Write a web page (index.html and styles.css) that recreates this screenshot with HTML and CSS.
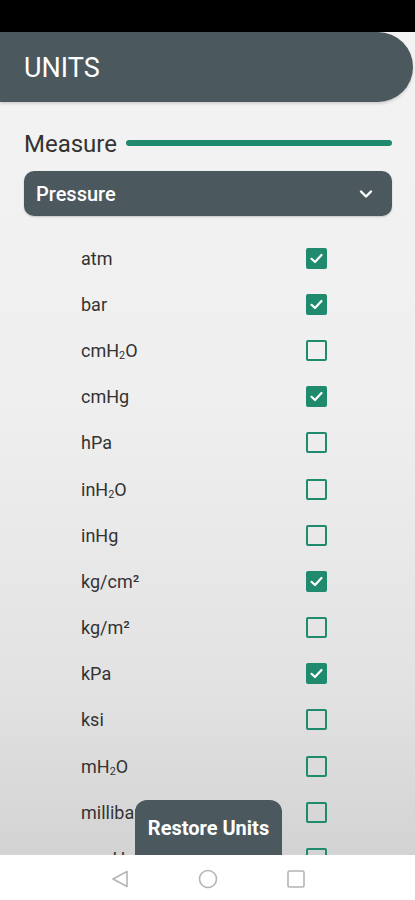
FILE: index.html
```html
<!DOCTYPE html>
<html lang="en">
<head>
  <meta charset="UTF-8">
  <title>Units</title>
  <meta name="viewport" content="width=device-width, initial-scale=1">
  <link rel="stylesheet" href="styles.css">
</head>
<body>
  <div class="status-bar"></div>
  <div class="screen">
    <div class="header">UNITS</div>
    <div class="measure">
      <span class="measure-label">Measure</span>
      <span class="measure-line"></span>
    </div>
    <div class="select">
      <span>Pressure</span>
      <svg class="chevron" width="14" height="10" viewBox="0 0 14 10">
        <path d="M2 2.5 L7 7.5 L12 2.5" fill="none" stroke="#fff" stroke-width="2.4" stroke-linecap="round" stroke-linejoin="round"/>
      </svg>
    </div>
    <div class="list">
      <div class="row"><span>atm</span><span class="box on"></span></div>
      <div class="row"><span>bar</span><span class="box on"></span></div>
      <div class="row"><span>cmH<sub>2</sub>O</span><span class="box"></span></div>
      <div class="row"><span>cmHg</span><span class="box on"></span></div>
      <div class="row"><span>hPa</span><span class="box"></span></div>
      <div class="row"><span>inH<sub>2</sub>O</span><span class="box"></span></div>
      <div class="row"><span>inHg</span><span class="box"></span></div>
      <div class="row"><span>kg/cm²</span><span class="box on"></span></div>
      <div class="row"><span>kg/m²</span><span class="box"></span></div>
      <div class="row"><span>kPa</span><span class="box on"></span></div>
      <div class="row"><span>ksi</span><span class="box"></span></div>
      <div class="row"><span>mH<sub>2</sub>O</span><span class="box"></span></div>
      <div class="row"><span>millibar</span><span class="box"></span></div>
      <div class="row"><span>mmHg</span><span class="box"></span></div>
    </div>
    <button class="restore">Restore Units</button>
  </div>
  <div class="nav-bar">
    <svg width="20" height="20" viewBox="0 0 20 20"><path d="M17 2.5 L3 10 L17 17.5 Z" fill="none" stroke="#b5b5b5" stroke-width="1.6" stroke-linejoin="round"/></svg>
    <svg width="20" height="20" viewBox="0 0 20 20"><circle cx="10" cy="10" r="8.5" fill="none" stroke="#b5b5b5" stroke-width="1.6"/></svg>
    <svg width="20" height="20" viewBox="0 0 20 20"><rect x="2" y="2" width="16" height="16" rx="1.5" fill="none" stroke="#b5b5b5" stroke-width="1.6"/></svg>
  </div>
</body>
</html>
```

FILE: styles.css
```css
body {
  margin: 0;
  width: 415px;
  height: 900px;
  overflow: hidden;
  font-family: Roboto, "Noto Sans", sans-serif;
  background: #fff;
}
.status-bar {
  height: 32px;
  background: #000;
}
.screen {
  position: relative;
  height: 823px;
  overflow: hidden;
  background: linear-gradient(#f3f3f3 0%, #efefef 45%, #e2e2e2 80%, #d3d3d3 100%);
}
.header {
  width: 389px;
  height: 70px;
  padding-left: 24px;
  border-radius: 0 35px 35px 0;
  background: #4b585e;
  color: #fff;
  font-size: 27px;
  line-height: 72px;
  box-shadow: 0 2px 3px #0002;
}
.measure {
  display: flex;
  align-items: center;
  gap: 9px;
  margin: 27px 23px 0 24px;
}
.measure-label {
  font-size: 24px;
  color: #333;
  line-height: 30px;
}
.measure-line {
  flex: 1;
  height: 6px;
  margin-top: -3px;
  border-radius: 3px;
  background: #1f8a6d;
}
.select {
  display: flex;
  align-items: center;
  justify-content: space-between;
  height: 45px;
  margin: 12px 23px 0 24px;
  padding: 0 19px 0 12px;
  border-radius: 10px;
  background: #4b585e;
  color: #fff;
  font-size: 20px;
  font-weight: 500;
  box-shadow: 0 1px 2px #0003;
}
.list {
  margin-top: 19px;
}
.row {
  display: flex;
  align-items: center;
  justify-content: space-between;
  height: 46.2px;
  padding: 0 88px 0 81px;
  font-size: 18px;
  color: #333;
}
.row sub {
  font-size: 0.6em;
  line-height: 0;
  vertical-align: -0.2em;
}
.box {
  width: 17px;
  height: 17px;
  border: 2px solid #1f8a6d;
  border-radius: 2px;
}
.box.on {
  background: #1f8a6d url("data:image/svg+xml,%3Csvg xmlns='http://www.w3.org/2000/svg' viewBox='0 0 17 17'%3E%3Cpath d='M3.5 8.8 L7 12 L13.5 5' fill='none' stroke='%23fff' stroke-width='2.2' stroke-linecap='round' stroke-linejoin='round'/%3E%3C/svg%3E") center / 17px 17px no-repeat;
}
.restore {
  position: absolute;
  left: 135px;
  top: 768px;
  width: 147px;
  height: 70px;
  padding: 17px 0 31px;
  border: none;
  border-radius: 12px 12px 0 0;
  background: #4b585e;
  color: #fff;
  font-family: Roboto, sans-serif;
  font-size: 20px;
  font-weight: 700;
  line-height: 22px;
}
.nav-bar {
  display: flex;
  justify-content: center;
  gap: 68px;
  padding-top: 14px;
  height: 31px;
  background: #fff;
}
```
